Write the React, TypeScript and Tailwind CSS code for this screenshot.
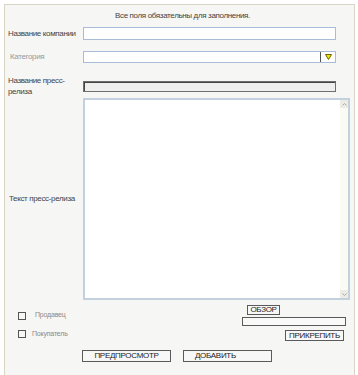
import React from "react";

const font = { fontFamily: '"Liberation Sans", Arial, sans-serif' };

function Btn({ children, className }: { children: React.ReactNode; className: string }) {
    return (
        <button
            className={`border border-[#5a5a5a] bg-[#f7f7f7] text-[8px] tracking-[-0.3px] leading-none text-[#222] uppercase flex items-center ${className}`}
        >
            {children}
        </button>
    );
}

export default function App() {
    return (
        <div className="w-[358px] h-[375px] bg-white pt-[4px] pl-[4px] overflow-hidden" style={font}>
            <div className="w-[351px] h-[380px] border border-[#d9d6c6] bg-[#f6f6f5] text-[8px] tracking-[-0.35px] text-[#444]">
                <p className="pt-[6px] leading-[10px] text-center pl-[6px]">
                    Все поля обязательны для заполнения.
                </p>

                {/* company */}
                <div className="flex items-center h-[13px] mt-[6px]">
                    <span className="w-[78px] pl-[3px] whitespace-nowrap">Название компании</span>
                    <input className="w-[253px] h-[13px] border border-[#a9bcd6] bg-white outline-none" />
                </div>

                {/* category */}
                <div className="flex items-center h-[12px] mt-[11px]">
                    <span className="w-[78px] pl-[5px] text-[#999]">Категория</span>
                    <div className="w-[253px] h-[12px] border border-[#a9bcd6] bg-white flex justify-end">
                        <div className="w-[15px] h-full border-l border-[#555] flex items-center justify-center">
                            <svg width="7" height="6" viewBox="0 0 7 6">
                                <path d="M0.5 0.5 H6.5 L3.5 5.5 Z" fill="#f2e600" stroke="#6b6400" strokeWidth="1" />
                            </svg>
                        </div>
                    </div>
                </div>

                {/* title */}
                <div className="flex items-center h-[20px] mt-[13px]">
                    <span className="w-[78px] pl-[3px] leading-[11px]">
                        Название пресс-
                        <br />
                        релиза
                    </span>
                    <input className="w-[253px] h-[11px] border border-[#6f6f6f] bg-[#efefef] shadow-[inset_1px_1px_0_#444] outline-none" />
                </div>

                {/* text */}
                <div className="flex items-center mt-[2px]">
                    <span className="w-[78px] pl-[4px] whitespace-nowrap">Текст пресс-релиза</span>
                    <div className="w-[267px] h-[202px] border-2 border-[#c3d0e0] bg-white flex">
                        <textarea className="flex-1 resize-none outline-none bg-white" />
                        <div className="w-[8px] bg-[#fbfbf5] flex flex-col justify-between">
                            <div className="h-[8px] bg-[#ecece4] flex items-center justify-center">
                                <svg width="5" height="3" viewBox="0 0 5 3">
                                    <path d="M0.5 2.5 L2.5 0.5 L4.5 2.5" fill="none" stroke="#aaa" strokeWidth="1" />
                                </svg>
                            </div>
                            <div className="h-[8px] bg-[#ecece4] flex items-center justify-center">
                                <svg width="5" height="3" viewBox="0 0 5 3">
                                    <path d="M0.5 0.5 L2.5 2.5 L4.5 0.5" fill="none" stroke="#aaa" strokeWidth="1" />
                                </svg>
                            </div>
                        </div>
                    </div>
                </div>

                {/* bottom */}
                <div className="flex pl-[13px]">
                    <div className="w-[224px] pt-[12px] text-[7px] tracking-[-0.2px] text-[#8a8a8a]">
                        <div className="flex items-center h-[8px]">
                            <span className="w-[8px] h-[8px] border border-[#555] bg-[#f6f6f5]" />
                            <span className="ml-[9px] -mt-[2px]">Продавец</span>
                        </div>
                        <div className="flex items-center h-[8px] mt-[10px]">
                            <span className="w-[8px] h-[8px] border border-[#555] bg-[#f6f6f5]" />
                            <span className="ml-[6px]">Покупатель</span>
                        </div>
                    </div>
                    <div className="w-[104px] pt-[5px] flex flex-col">
                        <Btn className="ml-[5px] w-[33px] h-[10px] justify-center">Обзор</Btn>
                        <div className="mt-[2px] w-[104px] h-[9px] border border-[#5a5a5a] bg-[#f9f9f9]" />
                        <Btn className="mt-[4px] ml-[43px] w-[59px] h-[11px] justify-center">Прикрепить</Btn>
                    </div>
                </div>

                <div className="flex mt-[9px] pl-[77px] gap-[12px]">
                    <Btn className="w-[89px] h-[12px] justify-center">Предпросмотр</Btn>
                    <Btn className="w-[89px] h-[12px] pl-[11px]">Добавить</Btn>
                </div>
            </div>
        </div>
    );
}
